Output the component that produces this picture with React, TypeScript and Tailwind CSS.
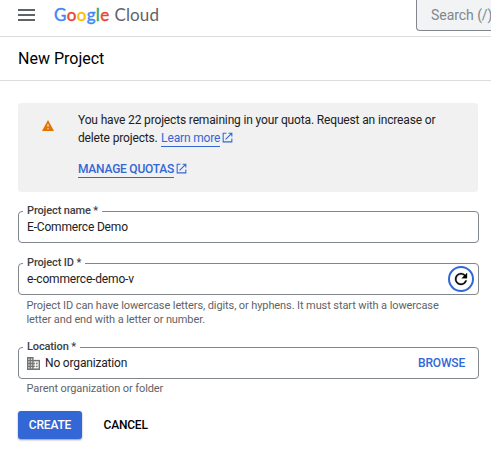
import type { ReactNode } from "react";

function ExternalIcon() {
  return (
    <svg viewBox="0 0 24 24" className="-mt-px ml-px h-[13px] w-[13px] shrink-0" fill="#3367d6">
      <path d="M19 19H5V5h5V3H3v18h18v-7h-2v5zM14 3v2h3.59l-9.83 9.83 1.41 1.41L19 6.41V10h2V3h-7z" />
    </svg>
  );
}

function Field({ label, children }: { label: string; children: ReactNode }) {
  return (
    <fieldset className="h-[38px] w-[461px] rounded-[4px] border border-[#80868b] pl-1">
      <legend className="h-[13px] px-1 text-[11px] leading-[11px] font-medium tracking-[-0.13px] whitespace-nowrap text-[#3c4043]">{label}</legend>
      <div className="flex h-[18px] items-center pl-1 text-[12px] tracking-[-0.17px] text-[#202124]">{children}</div>
    </fieldset>
  );
}

export default function App() {
  return (
    <div className="h-[466px] w-[491px] overflow-hidden bg-white font-[Roboto,sans-serif] text-[#202124]">
      <header className="flex h-[37px] border-b border-[#dadce0]">
        <svg viewBox="0 0 16 12" className="mt-[9px] ml-[18px] h-[12px] w-[17px] shrink-0" preserveAspectRatio="none" fill="#5f6368">
          <path d="M0 0h16v2H0zM0 5h16v2H0zM0 10h16v2H0z" />
        </svg>
        <div className="mt-[5px] ml-[19px] flex h-5 w-[362px] shrink-0 font-[Lato,sans-serif] text-[17px] leading-5">
          <span className="w-[60.5px] tracking-[0.35px] [-webkit-text-stroke:0.4px_currentColor]">
            <span className="text-[#4285f4]">G</span>
            <span className="text-[#ea4335]">o</span>
            <span className="text-[#fbbc04]">o</span>
            <span className="text-[#4285f4]">g</span>
            <span className="text-[#34a853]">l</span>
            <span className="text-[#ea4335]">e</span>
          </span>
          <span className="tracking-[0.1px] text-[#5f6368]">Cloud</span>
        </div>
        <div className="-mt-[5px] h-[36px] w-[75px] shrink-0 rounded-l-[4px] border border-r-0 border-[#80868b] bg-[#f1f3f4] pt-[9px] pl-[14px] text-[14px] leading-[20px] tracking-[-0.05px] whitespace-nowrap text-[#80868b]">
          Search (/)
        </div>
      </header>
      <div className="flex h-[44px] items-center border-b border-[#dadce0] pl-[18px] text-[16px] text-black">New Project</div>
      <main className="pt-[22px] pl-[18px]">
        <section className="flex h-[89px] w-[460px] rounded-[3px] bg-[#f1f1f1] pt-[8px] text-[12px] leading-[18px] tracking-[-0.15px]">
          <svg viewBox="0 0 12 11" className="mt-[9px] ml-[24px] h-[11px] w-[12px] shrink-0">
            <path d="M6 0L12 11H0z" fill="#e37400" />
            <path d="M5.4 4h1.2v3H5.4zM5.4 8h1.2v1.2H5.4z" fill="#f8d5b0" />
          </svg>
          <div className="ml-[24px] whitespace-nowrap">
            <p>You have 22 projects remaining in your quota. Request an increase or</p>
            <p className="flex h-[18px] items-center">
              delete projects.
              <a className="mt-px ml-[3.5px] h-[17px] border-b border-[#3367d6] leading-[17px] text-[#3367d6]">Learn more</a>
              <ExternalIcon />
            </p>
            <p className="mt-[13px] flex h-[18px] items-center font-medium tracking-[-0.23px]">
              <a className="mt-px h-[17px] border-b border-[#3367d6] leading-[17px] text-[#3367d6]">MANAGE QUOTAS</a>
              <ExternalIcon />
            </p>
          </div>
        </section>
        <div className="pt-[13px]">
          <Field label="Project name *">E-Commerce Demo</Field>
        </div>
        <div className="pt-[14px]">
          <Field label="Project ID *">
            <span className="flex-1">e-commerce-demo-v</span>
            <button className="mr-[4px] flex h-[26px] w-[26px] shrink-0 items-center justify-center rounded-full border-2 border-[#3367d6]">
              <svg viewBox="0 0 24 24" className="h-[18px] w-[18px] shrink-0" fill="#000" stroke="#000" strokeWidth="0.4">
                <path d="M17.65 6.35A7.96 7.96 0 0 0 12 4a8 8 0 1 0 7.73 10h-2.08A6 6 0 1 1 12 6c1.66 0 3.14.69 4.22 1.78L13 11h7V4z" />
              </svg>
            </button>
          </Field>
        </div>
        <p className="pt-[4px] pl-[8.5px] text-[11px] leading-[14px] tracking-[-0.1px] whitespace-nowrap text-[#5f6368]">
          Project ID can have lowercase letters, digits, or hyphens. It must start with a lowercase
          <br />
          letter and end with a letter or number.
        </p>
        <div className="pt-[14px]">
          <Field label="Location *">
            <svg viewBox="2 3 20 18" preserveAspectRatio="none" className="h-[13px] w-[13px] shrink-0" fill="#757575" stroke="#757575" strokeWidth="0.3">
              <path d="M12 7V3H2v18h20V7H12zM6 19H4v-2h2v2zm0-4H4v-2h2v2zm0-4H4V9h2v2zm0-4H4V5h2v2zm4 12H8v-2h2v2zm0-4H8v-2h2v2zm0-4H8V9h2v2zm0-4H8V5h2v2zm10 12h-8v-2h2v-2h-2v-2h2v-2h-2V9h8v10zm-2-8h-2v2h2v-2zm0 4h-2v2h2v-2z" />
            </svg>
            <span className="ml-[5px] flex-1">No organization</span>
            <button className="mr-[13px] -mt-px font-medium text-[#3367d6]">BROWSE</button>
          </Field>
        </div>
        <p className="pt-[3px] pl-[8.5px] text-[11px] leading-[14px] tracking-[-0.1px] text-[#5f6368]">Parent organization or folder</p>
        <div className="mt-[15px] flex text-[12px] font-medium tracking-[-0.2px]">
          <button className="h-[28px] w-[64px] rounded-[3px] bg-[#3367d6] text-white shadow-[0_1px_2px_rgba(0,0,0,0.4)]">CREATE</button>
          <button className="ml-[21.5px] text-black">CANCEL</button>
        </div>
      </main>
    </div>
  );
}
